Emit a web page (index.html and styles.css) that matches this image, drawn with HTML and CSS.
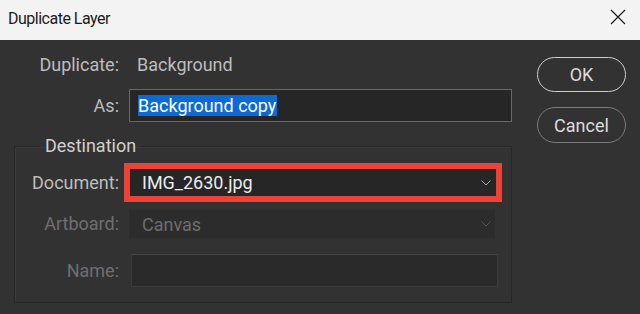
FILE: index.html
```html
<!DOCTYPE html>
<html>
<head>
<meta charset="utf-8">
<link rel="stylesheet" href="styles.css">
</head>
<body>
<div class="titlebar">
  <span class="title">Duplicate Layer</span>
  <svg class="close" width="16" height="16" viewBox="0 0 16 16"><path d="M1 1L15 15M15 1L1 15" stroke="#1b1b1b" stroke-width="1.2" fill="none"/></svg>
</div>
<div class="content">
  <div class="form">
    <div class="grid top">
      <span class="label">Duplicate:</span>
      <span class="value">Background</span>
      <span class="label">As:</span>
      <div class="input as"><span class="sel">Background copy</span></div>
    </div>
    <fieldset class="group">
      <legend>Destination</legend>
      <div class="grid inner">
        <span class="label">Document:</span>
        <div class="select doc"><span>IMG_2630.jpg</span><svg width="10" height="6" viewBox="0 0 10 6"><path d="M0.5 0.5L5 5L9.5 0.5" stroke="#a8a8a8" stroke-width="1" fill="none"/></svg></div>
        <span class="label dim">Artboard:</span>
        <div class="select art"><span>Canvas</span><svg width="10" height="6" viewBox="0 0 10 6"><path d="M0.5 0.5L5 5L9.5 0.5" stroke="#575757" stroke-width="1" fill="none"/></svg></div>
        <span class="label dim">Name:</span>
        <div class="input name"></div>
      </div>
    </fieldset>
  </div>
  <div class="buttons">
    <div class="btn ok">OK</div>
    <div class="btn cancel">Cancel</div>
  </div>
</div>
</body>
</html>
```
FILE: styles.css
```css
html, body {
  margin: 0;
  padding: 0;
  width: 640px;
  height: 314px;
  overflow: hidden;
  background: #323232;
  font-family: Roboto, "Open Sans", sans-serif;
}
.titlebar {
  height: 40px;
  background: #f3f3f3;
  display: flex;
  align-items: center;
  justify-content: space-between;
  padding: 0 14px 0 8px;
  box-sizing: border-box;
}
.title {
  font-size: 16px;
  letter-spacing: -0.5px;
  color: #1b1b1b;
  margin-top: -3px;
}
.close {
  margin-top: -6px;
}
.content {
  display: flex;
  padding: 0 0 0 14px;
}
.form {
  width: 498px;
}
.grid {
  display: grid;
  grid-template-columns: 105px 1fr;
  column-gap: 10px;
  align-items: center;
  font-size: 18px;
}
.top {
  padding-top: 14px;
  row-gap: 13px;
}
.label {
  text-align: right;
  color: #bdbdbd;
  line-height: 22px;
}
.label.dim {
  color: #6f6f6f;
}
.value {
  color: #bdbdbd;
  line-height: 22px;
  padding-left: 8px;
}
.input {
  box-sizing: border-box;
  height: 33px;
  background: #262626;
  display: flex;
  align-items: center;
}
.as {
  border: 1px solid #3d6fb3;
  padding-left: 8px;
}
.sel {
  background: #0b6ad3;
  color: #ffffff;
  line-height: 21px;
  padding-right: 1px;
}
.group {
  margin: 13px 0 0 0;
  border: 1px solid #272727;
  box-shadow: inset 1px 1px 0 #3a3a3a;
  padding: 0 13px 15px 0;
  min-width: 0;
  box-sizing: border-box;
}
.group legend {
  font-size: 18px;
  color: #d0d0d0;
  margin-left: 25px;
  padding: 0 5px;
  line-height: 22px;
}
.inner {
  grid-template-columns: 104px 1fr;
  padding-top: 11px;
}
.select {
  display: flex;
  align-items: center;
  justify-content: space-between;
  box-sizing: border-box;
  padding: 0 6px 0 13px;
}
.doc {
  height: 29px;
  background: #262626;
  color: #ececec;
  outline: 6px solid #ec4237;
  outline-offset: -1px;
  margin-right: 1px;
}
.art {
  height: 28px;
  margin-top: 13px;
  background: #2c2c2c;
  color: #6e6e6e;
  margin-right: 3px;
  padding-right: 4px;
}
.name {
  margin-top: 16px;
  margin-left: 2px;
  background: #2a2a2a;
  border: 1px solid #3b3b3b;
  border-top-color: #444;
}
.art + .label {
  margin-top: 16px;
}
.doc + .label {
  margin-top: 13px;
}
.buttons {
  margin-left: 25px;
  padding-top: 17px;
  display: flex;
  flex-direction: column;
  gap: 15px;
}
.btn {
  width: 89px;
  height: 35px;
  box-sizing: border-box;
  border-radius: 18px;
  display: flex;
  align-items: center;
  justify-content: center;
  font-size: 18px;
  color: #dcdcdc;
}
.ok {
  border: 1.5px solid #cfcfcf;
}
.cancel {
  height: 36px;
  border: 1px solid #7c7c7c;
}
```
